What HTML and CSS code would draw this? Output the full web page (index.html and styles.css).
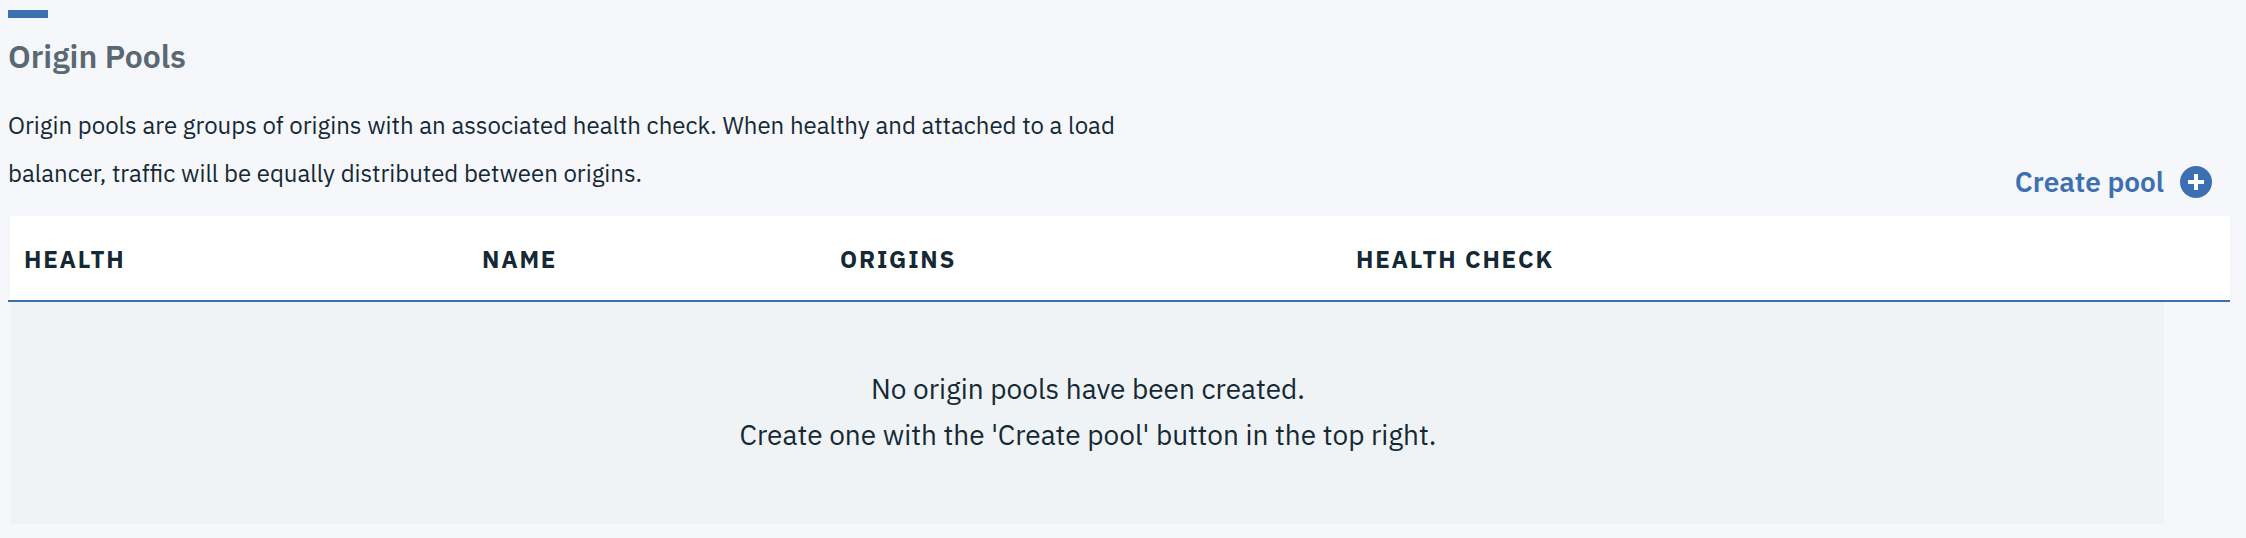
FILE: index.html
```html
<!DOCTYPE html>
<html lang="en"><head><meta charset="utf-8"><title>Origin Pools</title><link rel="stylesheet" href="styles.css"></head>
<body><main class="page">
<header class="head"><div class="intro"><div class="accent"></div><h1 class="title">Origin Pools</h1>
<p class="desc">Origin pools are groups of origins with an associated health check. When healthy and attached to a load<br>balancer, traffic will be equally distributed between origins.</p></div>
<button class="create"><span>Create pool</span><svg class="plus" viewBox="0 0 32 32"><circle cx="16" cy="16" r="16" fill="#3d70b2"/><path d="M16 8v16M8 16h16" stroke="#fff" stroke-width="4"/></svg></button></header>
<section><div class="thead"><span>HEALTH</span><span>NAME</span><span>ORIGINS</span><span>HEALTH CHECK</span></div>
<div class="empty"><p>No origin pools have been created.</p><p>Create one with the 'Create pool' button in the top right.</p></div></section>
</main></body></html>
```
FILE: styles.css
```css
* { box-sizing: border-box; margin: 0; padding: 0; }
body { background: #f5f7fb; font-family: "IBM Plex Sans", "Noto Sans", sans-serif; color: #152935; }
.page { width: 2246px; height: 538px; padding: 10px 16px 0 8px; overflow: hidden; }
.head { display: flex; justify-content: space-between; height: 206px; }
.accent { width: 40px; height: 8px; background: #3d70b2; }
.title { margin-top: 13px; font-size: 32px; line-height: 50px; color: #5a6872; font-weight: 600; }
.desc { margin-top: 20px; font-size: 24px; line-height: 48px; white-space: nowrap; }
.create { display: flex; align-items: center; gap: 16px; height: 40px; margin: 152px 18px 0 0; border: 0; background: none; color: #3d70b2; font: 600 28px/40px "IBM Plex Sans", "Noto Sans", sans-serif; }
.plus { width: 32px; height: 32px; }
.thead { display: grid; grid-template-columns: 458px 358px 516px 1fr; height: 86px; padding-left: 16px; background: linear-gradient(to right, #f5f7fb 2px, #fff 2px); border-bottom: 2px solid #3d70b2; font-size: 24px; line-height: 87px; font-weight: 700; letter-spacing: 1.8px; }
.empty { width: 2154px; height: 222px; margin-left: 2px; padding: 64px 0 0 2px; background: #eff3f6; text-align: center; font-size: 28px; line-height: 46px; }
```
